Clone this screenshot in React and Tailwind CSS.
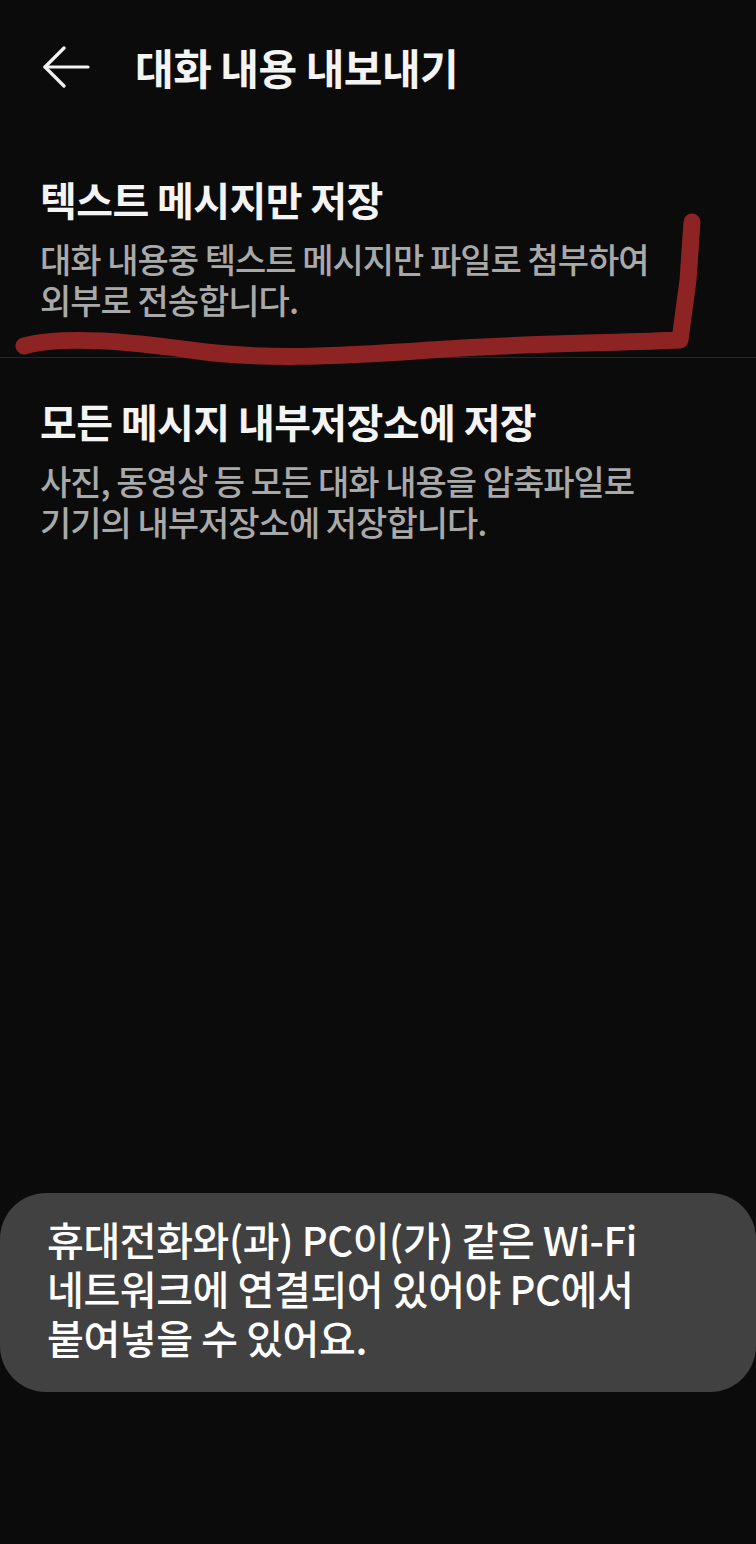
import { useState } from 'react'

const FONT = { fontFamily: '"Noto Sans CJK KR", "Noto Sans", sans-serif' }

const OPTIONS = [
  { title: '텍스트 메시지만 저장', desc: ['대화 내용중 텍스트 메시지만 파일로 첨부하여', '외부로 전송합니다.'] },
  { title: '모든 메시지 내부저장소에 저장', desc: ['사진, 동영상 등 모든 대화 내용을 압축파일로', '기기의 내부저장소에 저장합니다.'] },
]

function BackArrow() {
  return (
    <svg width="48" height="42" viewBox="0 0 48 42" fill="none" stroke="#f2f2f2" strokeWidth="3.2" strokeLinecap="round" strokeLinejoin="round">
      <path d="M46 21H3" />
      <path d="M22 2L3 21l19 19" />
    </svg>
  )
}

export default function App() {
  const [picked, setPicked] = useState(null)

  return (
    <div className="relative min-h-[1544px] w-full overflow-hidden bg-[#0b0b0b] text-white" style={FONT}>
      {/* ── Header ── */}
      <header className="flex h-[134px] items-center pl-[42px]">
        <button className="flex items-center">
          <BackArrow />
        </button>
        <h1 className="ml-[45px] text-[42px] font-bold leading-none tracking-[-0.5px] text-[#f4f4f4]">
          대화 내용 내보내기
        </h1>
      </header>

      {/* ── Options ── */}
      <div className="flex flex-col">
        {OPTIONS.map((opt, i) => (
          <button
            key={opt.title}
            onClick={() => setPicked(i)}
            className={`flex flex-col px-[40px] text-left ${i === 0 ? 'pt-[40px] pb-[37px] border-b border-[#262626]' : 'pt-[38px]'} ${picked === i ? 'bg-white/5' : ''}`}
          >
            <span className="text-[40px] font-bold leading-[50px] tracking-[-0.6px] text-[#f4f4f4]">{opt.title}</span>
            <span className="mt-[14px] text-[34px] font-medium leading-[41px] tracking-[-1px] text-[#a9a9a9]">
              {opt.desc[0]}
              <br />
              {opt.desc[1]}
            </span>
          </button>
        ))}
      </div>

      {/* ── Hand-drawn annotation ── */}
      <svg className="pointer-events-none absolute left-0 top-0" width="756" height="400" viewBox="0 0 756 400" fill="none">
        <path
          d="M24 346 C 60 336, 120 340, 190 350 S 330 357, 430 350 S 620 343, 680 340 L 688 280 L 692 222"
          stroke="#8e2323"
          strokeWidth="17"
          strokeLinecap="round"
          strokeLinejoin="round"
        />
      </svg>

      {/* ── Toast ── */}
      <div className="absolute left-0 right-0 top-[1193px] rounded-[46px] bg-[#414141] pl-[47px] pr-[30px] pt-[22px] pb-[30px]">
        <p className="text-[40px] font-medium leading-[49px] tracking-[-0.4px] text-white">
          휴대전화와(과) PC이(가) 같은 Wi-Fi
          <br />
          네트워크에 연결되어 있어야 PC에서
          <br />
          붙여넣을 수 있어요.
        </p>
      </div>
    </div>
  )
}
